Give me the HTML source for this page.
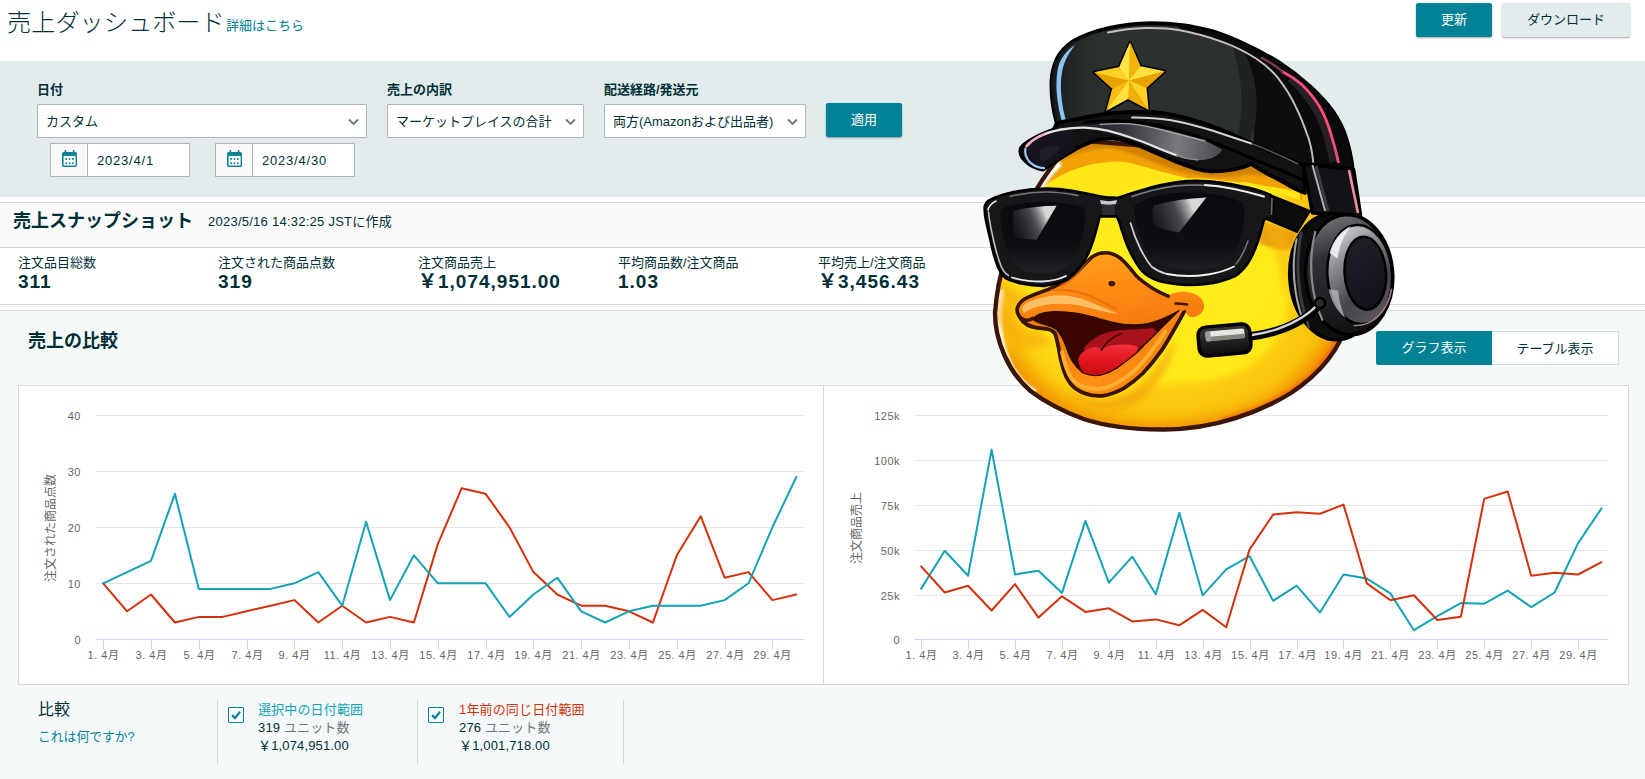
<!DOCTYPE html>
<html lang="ja">
<head>
<meta charset="utf-8">
<title>売上ダッシュボード</title>
<style>
*{box-sizing:border-box;margin:0;padding:0}
html,body{width:1645px;height:779px;overflow:hidden;background:#fff}
body{position:relative;font-family:"Liberation Sans","Noto Sans CJK JP",sans-serif;color:#002f36;font-size:13px}
.abs{position:absolute;white-space:nowrap}
.title{left:7px;top:6px;font-size:24.2px;font-weight:300;line-height:34px;color:#002f36}
.tlink{left:226px;top:16px;font-size:13px;line-height:20px;color:#008296}
.btn{height:34px;border-radius:2px;text-align:center;line-height:34px;font-size:13px;box-shadow:0 1px 2px rgba(0,0,0,.35)}
.btn.pri{background:#008296;color:#fff}
.btn.sec{background:#e3eced;color:#002f36}
.band{left:0;top:61px;width:1645px;height:136px;background:#e3eced}
.lbl{font-weight:700;font-size:13px;line-height:18px}
.sel{height:34px;background:#fff;border:1px solid #aab7b8;border-radius:1px;font-size:13px;line-height:34px;padding-left:8px;color:#002f36}
.chev{position:absolute;right:7px;top:13px;width:11px;height:8px}
.date{height:34px;background:#fff;border:1px solid #aab7b8;font-size:13px;line-height:34px;letter-spacing:.8px}
.date .ic{position:absolute;left:0;top:0;width:37px;height:32px;background:#fafafa;border-right:1px solid #aab7b8}
.date .tx{position:absolute;left:46px;top:0}
.hline{left:0;width:1645px;height:1px;background:#d5dbdb}
.snaphead{left:0;top:203px;width:1645px;height:44px;background:#fafafa}
.h2{font-weight:700;font-size:18px;line-height:26px}
.mlabel{font-size:13px;line-height:16px}
.mval{font-weight:700;font-size:19px;line-height:22px;letter-spacing:1px}
.sect{left:0;top:311px;width:1645px;height:468px;background:#f5f9fa}
.chartbox{left:18px;top:385px;width:1611px;height:300px;background:#fff;border:1px solid #d6d8d8}
.charts{position:absolute;left:0;top:0}
.ax{font-size:11px;fill:#666;font-family:"Liberation Sans","Noto Sans CJK JP",sans-serif;letter-spacing:.5px}
.axt{font-size:12px;fill:#666;font-family:"Liberation Sans","Noto Sans CJK JP",sans-serif}
.vsep{width:1px;top:700px;height:64px;background:#d5dbdb}
.cb{width:16px;height:16px;border:1px solid #008296;background:#fff;border-radius:1px}
.leg{font-size:13px;line-height:18px;letter-spacing:.15px}
.leg .g{color:#6c7778}
.tog{height:34px;top:331px;line-height:34px;text-align:center;font-size:13px}
.duck{position:absolute;left:0;top:0}
</style>
</head>
<body>
<div class="abs title">売上ダッシュボード</div>
<div class="abs tlink">詳細はこちら</div>
<div class="abs btn pri" style="left:1416px;top:3px;width:76px">更新</div>
<div class="abs btn sec" style="left:1502px;top:3px;width:128px">ダウンロード</div>

<div class="abs band"></div>
<div class="abs lbl" style="left:37px;top:81px">日付</div>
<div class="abs lbl" style="left:387px;top:81px">売上の内訳</div>
<div class="abs lbl" style="left:604px;top:81px">配送経路/発送元</div>
<div class="abs sel" style="left:37px;top:104px;width:330px">カスタム<svg class="chev" viewBox="0 0 11 8"><path d="M1 1.5 L5.5 6 L10 1.5" fill="none" stroke="#6c7778" stroke-width="1.9"/></svg></div>
<div class="abs sel" style="left:387px;top:104px;width:197px">マーケットプレイスの合計<svg class="chev" viewBox="0 0 11 8"><path d="M1 1.5 L5.5 6 L10 1.5" fill="none" stroke="#6c7778" stroke-width="1.9"/></svg></div>
<div class="abs sel" style="left:604px;top:104px;width:202px">両方(Amazonおよび出品者)<svg class="chev" viewBox="0 0 11 8"><path d="M1 1.5 L5.5 6 L10 1.5" fill="none" stroke="#6c7778" stroke-width="1.9"/></svg></div>
<div class="abs btn pri" style="left:826px;top:103px;width:76px">適用</div>

<div class="abs date" style="left:50px;top:143px;width:140px"><span class="ic"><svg width="37" height="32" viewBox="0 0 37 32"><g fill="#0f8199"><rect x="11" y="8" width="15" height="15" rx="1.8"/><rect x="13.6" y="6" width="1.6" height="3"/><rect x="21.8" y="6" width="1.6" height="3"/></g><rect x="12.6" y="12" width="12" height="9.5" fill="#fff"/><g fill="#0f8199"><rect x="14.4" y="14" width="1.6" height="1.8"/><rect x="17.7" y="14" width="1.6" height="1.8"/><rect x="21" y="14" width="1.6" height="1.8"/><rect x="14.4" y="18.3" width="1.6" height="1.8"/><rect x="17.7" y="18.3" width="1.6" height="1.8"/><rect x="21" y="18.3" width="1.6" height="1.8"/></g></svg></span><span class="tx">2023/4/1</span></div>
<div class="abs date" style="left:215px;top:143px;width:140px"><span class="ic"><svg width="37" height="32" viewBox="0 0 37 32"><g fill="#0f8199"><rect x="11" y="8" width="15" height="15" rx="1.8"/><rect x="13.6" y="6" width="1.6" height="3"/><rect x="21.8" y="6" width="1.6" height="3"/></g><rect x="12.6" y="12" width="12" height="9.5" fill="#fff"/><g fill="#0f8199"><rect x="14.4" y="14" width="1.6" height="1.8"/><rect x="17.7" y="14" width="1.6" height="1.8"/><rect x="21" y="14" width="1.6" height="1.8"/><rect x="14.4" y="18.3" width="1.6" height="1.8"/><rect x="17.7" y="18.3" width="1.6" height="1.8"/><rect x="21" y="18.3" width="1.6" height="1.8"/></g></svg></span><span class="tx">2023/4/30</span></div>

<div class="abs hline" style="top:202px"></div>
<div class="abs snaphead"></div>
<div class="abs hline" style="top:247px"></div>
<div class="abs h2" style="left:13px;top:208px">売上スナップショット</div>
<div class="abs" style="left:208px;top:213px;font-size:13px;line-height:18px;letter-spacing:.25px">2023/5/16 14:32:25 JSTに作成</div>

<div class="abs mlabel" style="left:18px;top:255px">注文品目総数</div>
<div class="abs mval" style="left:18px;top:271px">311</div>
<div class="abs mlabel" style="left:218px;top:255px">注文された商品点数</div>
<div class="abs mval" style="left:218px;top:271px">319</div>
<div class="abs mlabel" style="left:418px;top:255px">注文商品売上</div>
<div class="abs mval" style="left:418px;top:271px">￥1,074,951.00</div>
<div class="abs mlabel" style="left:618px;top:255px">平均商品数/注文商品</div>
<div class="abs mval" style="left:618px;top:271px">1.03</div>
<div class="abs mlabel" style="left:818px;top:255px">平均売上/注文商品</div>
<div class="abs mval" style="left:818px;top:271px">￥3,456.43</div>

<div class="abs hline" style="top:304px"></div>
<div class="abs hline" style="top:310px"></div>
<div class="abs sect"></div>
<div class="abs h2" style="left:28px;top:328px">売上の比較</div>
<div class="abs tog" style="left:1376px;width:116px;background:#008296;color:#fff;border-radius:2px 0 0 2px">グラフ表示</div>
<div class="abs tog" style="left:1492px;width:127px;background:#fff;color:#002f36;border:1px solid #d5dbdb;border-left:0">テーブル表示</div>

<div class="abs chartbox"></div>
<div class="abs" style="left:823px;top:386px;width:1px;height:298px;background:#d5dbdb"></div>
<svg class="charts" width="1645" height="779" viewBox="0 0 1645 779">
<line x1="96" x2="804" y1="639.5" y2="639.5" stroke="#ccd6eb"/>
<text x="81" y="643.5" text-anchor="end" class="ax">0</text>
<line x1="96" x2="804" y1="583.5" y2="583.5" stroke="#e6e6e6"/>
<text x="81" y="587.5" text-anchor="end" class="ax">10</text>
<line x1="96" x2="804" y1="527.5" y2="527.5" stroke="#e6e6e6"/>
<text x="81" y="531.5" text-anchor="end" class="ax">20</text>
<line x1="96" x2="804" y1="471.5" y2="471.5" stroke="#e6e6e6"/>
<text x="81" y="475.5" text-anchor="end" class="ax">30</text>
<line x1="96" x2="804" y1="415.5" y2="415.5" stroke="#e6e6e6"/>
<text x="81" y="419.5" text-anchor="end" class="ax">40</text>
<line x1="915" x2="1608" y1="639.5" y2="639.5" stroke="#ccd6eb"/>
<text x="900" y="643.5" text-anchor="end" class="ax">0</text>
<line x1="915" x2="1608" y1="595.5" y2="595.5" stroke="#e6e6e6"/>
<text x="900" y="599.5" text-anchor="end" class="ax">25k</text>
<line x1="915" x2="1608" y1="550.5" y2="550.5" stroke="#e6e6e6"/>
<text x="900" y="554.5" text-anchor="end" class="ax">50k</text>
<line x1="915" x2="1608" y1="505.5" y2="505.5" stroke="#e6e6e6"/>
<text x="900" y="509.5" text-anchor="end" class="ax">75k</text>
<line x1="915" x2="1608" y1="460.5" y2="460.5" stroke="#e6e6e6"/>
<text x="900" y="464.5" text-anchor="end" class="ax">100k</text>
<line x1="915" x2="1608" y1="415.5" y2="415.5" stroke="#e6e6e6"/>
<text x="900" y="419.5" text-anchor="end" class="ax">125k</text>
<line x1="103.5" x2="103.5" y1="639.5" y2="649.5" stroke="#ccd6eb"/>
<text x="103.5" y="658.5" text-anchor="middle" class="ax">1. 4月</text>
<line x1="921.5" x2="921.5" y1="639.5" y2="649.5" stroke="#ccd6eb"/>
<text x="921.5" y="658.5" text-anchor="middle" class="ax">1. 4月</text>
<line x1="151.5" x2="151.5" y1="639.5" y2="649.5" stroke="#ccd6eb"/>
<text x="151.5" y="658.5" text-anchor="middle" class="ax">3. 4月</text>
<line x1="968.5" x2="968.5" y1="639.5" y2="649.5" stroke="#ccd6eb"/>
<text x="968.5" y="658.5" text-anchor="middle" class="ax">3. 4月</text>
<line x1="199.5" x2="199.5" y1="639.5" y2="649.5" stroke="#ccd6eb"/>
<text x="199.5" y="658.5" text-anchor="middle" class="ax">5. 4月</text>
<line x1="1015.5" x2="1015.5" y1="639.5" y2="649.5" stroke="#ccd6eb"/>
<text x="1015.5" y="658.5" text-anchor="middle" class="ax">5. 4月</text>
<line x1="247.5" x2="247.5" y1="639.5" y2="649.5" stroke="#ccd6eb"/>
<text x="247.5" y="658.5" text-anchor="middle" class="ax">7. 4月</text>
<line x1="1062.5" x2="1062.5" y1="639.5" y2="649.5" stroke="#ccd6eb"/>
<text x="1062.5" y="658.5" text-anchor="middle" class="ax">7. 4月</text>
<line x1="294.5" x2="294.5" y1="639.5" y2="649.5" stroke="#ccd6eb"/>
<text x="294.5" y="658.5" text-anchor="middle" class="ax">9. 4月</text>
<line x1="1109.5" x2="1109.5" y1="639.5" y2="649.5" stroke="#ccd6eb"/>
<text x="1109.5" y="658.5" text-anchor="middle" class="ax">9. 4月</text>
<line x1="342.5" x2="342.5" y1="639.5" y2="649.5" stroke="#ccd6eb"/>
<text x="342.5" y="658.5" text-anchor="middle" class="ax">11. 4月</text>
<line x1="1156.5" x2="1156.5" y1="639.5" y2="649.5" stroke="#ccd6eb"/>
<text x="1156.5" y="658.5" text-anchor="middle" class="ax">11. 4月</text>
<line x1="390.5" x2="390.5" y1="639.5" y2="649.5" stroke="#ccd6eb"/>
<text x="390.5" y="658.5" text-anchor="middle" class="ax">13. 4月</text>
<line x1="1203.5" x2="1203.5" y1="639.5" y2="649.5" stroke="#ccd6eb"/>
<text x="1203.5" y="658.5" text-anchor="middle" class="ax">13. 4月</text>
<line x1="438.5" x2="438.5" y1="639.5" y2="649.5" stroke="#ccd6eb"/>
<text x="438.5" y="658.5" text-anchor="middle" class="ax">15. 4月</text>
<line x1="1250.5" x2="1250.5" y1="639.5" y2="649.5" stroke="#ccd6eb"/>
<text x="1250.5" y="658.5" text-anchor="middle" class="ax">15. 4月</text>
<line x1="486.5" x2="486.5" y1="639.5" y2="649.5" stroke="#ccd6eb"/>
<text x="486.5" y="658.5" text-anchor="middle" class="ax">17. 4月</text>
<line x1="1297.5" x2="1297.5" y1="639.5" y2="649.5" stroke="#ccd6eb"/>
<text x="1297.5" y="658.5" text-anchor="middle" class="ax">17. 4月</text>
<line x1="533.5" x2="533.5" y1="639.5" y2="649.5" stroke="#ccd6eb"/>
<text x="533.5" y="658.5" text-anchor="middle" class="ax">19. 4月</text>
<line x1="1343.5" x2="1343.5" y1="639.5" y2="649.5" stroke="#ccd6eb"/>
<text x="1343.5" y="658.5" text-anchor="middle" class="ax">19. 4月</text>
<line x1="581.5" x2="581.5" y1="639.5" y2="649.5" stroke="#ccd6eb"/>
<text x="581.5" y="658.5" text-anchor="middle" class="ax">21. 4月</text>
<line x1="1390.5" x2="1390.5" y1="639.5" y2="649.5" stroke="#ccd6eb"/>
<text x="1390.5" y="658.5" text-anchor="middle" class="ax">21. 4月</text>
<line x1="629.5" x2="629.5" y1="639.5" y2="649.5" stroke="#ccd6eb"/>
<text x="629.5" y="658.5" text-anchor="middle" class="ax">23. 4月</text>
<line x1="1437.5" x2="1437.5" y1="639.5" y2="649.5" stroke="#ccd6eb"/>
<text x="1437.5" y="658.5" text-anchor="middle" class="ax">23. 4月</text>
<line x1="677.5" x2="677.5" y1="639.5" y2="649.5" stroke="#ccd6eb"/>
<text x="677.5" y="658.5" text-anchor="middle" class="ax">25. 4月</text>
<line x1="1484.5" x2="1484.5" y1="639.5" y2="649.5" stroke="#ccd6eb"/>
<text x="1484.5" y="658.5" text-anchor="middle" class="ax">25. 4月</text>
<line x1="725.5" x2="725.5" y1="639.5" y2="649.5" stroke="#ccd6eb"/>
<text x="725.5" y="658.5" text-anchor="middle" class="ax">27. 4月</text>
<line x1="1531.5" x2="1531.5" y1="639.5" y2="649.5" stroke="#ccd6eb"/>
<text x="1531.5" y="658.5" text-anchor="middle" class="ax">27. 4月</text>
<line x1="772.5" x2="772.5" y1="639.5" y2="649.5" stroke="#ccd6eb"/>
<text x="772.5" y="658.5" text-anchor="middle" class="ax">29. 4月</text>
<line x1="1578.5" x2="1578.5" y1="639.5" y2="649.5" stroke="#ccd6eb"/>
<text x="1578.5" y="658.5" text-anchor="middle" class="ax">29. 4月</text>
<text transform="translate(55,528) rotate(-90)" text-anchor="middle" class="axt">注文された商品点数</text>
<text transform="translate(861,528) rotate(-90)" text-anchor="middle" class="axt">注文商品売上</text>
<polyline fill="none" stroke="#d5310a" stroke-width="2" stroke-linejoin="round" stroke-linecap="round" points="103.2,583.3 127.1,611.3 151.0,594.5 174.9,622.5 198.8,616.9 222.7,616.9 246.6,611.3 270.5,605.7 294.4,600.1 318.3,622.5 342.2,605.7 366.1,622.5 390.0,616.9 413.9,622.5 437.8,544.1 461.7,488.2 485.6,493.8 509.5,527.3 533.4,572.1 557.3,594.5 581.2,605.7 605.1,605.7 629.0,611.3 652.9,622.5 676.8,555.3 700.7,516.2 724.6,577.7 748.5,572.1 772.4,600.1 796.3,594.5"/>
<polyline fill="none" stroke="#13a3b5" stroke-width="2" stroke-linejoin="round" stroke-linecap="round" points="103.2,583.3 127.1,572.1 151.0,560.9 174.9,493.8 198.8,588.9 222.7,588.9 246.6,588.9 270.5,588.9 294.4,583.3 318.3,572.1 342.2,605.7 366.1,521.8 390.0,600.1 413.9,555.3 437.8,583.3 461.7,583.3 485.6,583.3 509.5,616.9 533.4,594.5 557.3,577.7 581.2,611.3 605.1,622.5 629.0,611.3 652.9,605.7 676.8,605.7 700.7,605.7 724.6,600.1 748.5,583.3 772.4,527.3 796.3,477.0"/>
<polyline fill="none" stroke="#13a3b5" stroke-width="2" stroke-linejoin="round" stroke-linecap="round" points="921.2,588.6 944.7,550.8 968.1,575.7 991.6,449.6 1015.0,574.5 1038.5,570.7 1062.0,592.9 1085.4,520.9 1108.9,582.7 1132.3,556.7 1155.8,594.3 1179.3,512.7 1202.7,595.4 1226.2,569.3 1249.6,556.2 1273.1,600.8 1296.6,585.7 1320.0,612.6 1343.5,574.5 1366.9,578.6 1390.4,593.4 1413.9,630.2 1437.3,616.2 1460.8,603.1 1484.2,603.7 1507.7,590.6 1531.2,607.1 1554.6,592.5 1578.1,543.1 1601.5,508.4"/>
<polyline fill="none" stroke="#d5310a" stroke-width="2" stroke-linejoin="round" stroke-linecap="round" points="921.2,566.4 944.7,592.5 968.1,585.7 991.6,610.5 1015.0,584.1 1038.5,617.6 1062.0,596.3 1085.4,611.9 1108.9,608.3 1132.3,621.4 1155.8,619.4 1179.3,625.3 1202.7,609.9 1226.2,627.3 1249.6,549.4 1273.1,514.6 1296.6,512.3 1320.0,513.7 1343.5,504.6 1366.9,583.4 1390.4,600.3 1413.9,595.2 1437.3,620.0 1460.8,616.7 1484.2,498.9 1507.7,491.5 1531.2,575.7 1554.6,572.7 1578.1,574.5 1601.5,562.1"/>
</svg>

<div class="abs" style="left:38px;top:698px;font-size:16px;line-height:24px">比較</div>
<div class="abs" style="left:38px;top:728px;font-size:12.8px;line-height:18px;color:#008296">これは何ですか?</div>
<div class="abs vsep" style="left:217px"></div>
<div class="abs vsep" style="left:417px"></div>
<div class="abs vsep" style="left:623px"></div>
<div class="abs cb" style="left:228px;top:707px"><svg width="14" height="14" viewBox="0 0 14 14"><path d="M3 7.2 L6 10 L11 3.8" fill="none" stroke="#008296" stroke-width="2.3"/></svg></div>
<div class="abs cb" style="left:428px;top:707px"><svg width="14" height="14" viewBox="0 0 14 14"><path d="M3 7.2 L6 10 L11 3.8" fill="none" stroke="#008296" stroke-width="2.3"/></svg></div>
<div class="abs leg" style="left:258px;top:701px"><div style="color:#13a3b5">選択中の日付範囲</div><div>319 <span class="g">ユニット数</span></div><div>￥1,074,951.00</div></div>
<div class="abs leg" style="left:459px;top:701px"><div style="color:#d5310a">1年前の同じ日付範囲</div><div>276 <span class="g">ユニット数</span></div><div>￥1,001,718.00</div></div>

<svg class="duck" width="1645" height="779" viewBox="0 0 1645 779">
<defs>
<radialGradient id="gHead" gradientUnits="userSpaceOnUse" cx="0" cy="0" r="1" gradientTransform="translate(1168 268) scale(186 166)">
<stop offset="0" stop-color="#fff21e"/><stop offset=".7" stop-color="#ffe818"/><stop offset=".88" stop-color="#fdd010"/><stop offset="1" stop-color="#f7b008"/>
</radialGradient>
<linearGradient id="gCrown" gradientUnits="userSpaceOnUse" x1="1060" y1="60" x2="1290" y2="130">
<stop offset="0" stop-color="#1c211e"/><stop offset=".45" stop-color="#343a34"/><stop offset=".8" stop-color="#1a1e1b"/><stop offset="1" stop-color="#0a0b0a"/>
</linearGradient>
<linearGradient id="gBrim" gradientUnits="userSpaceOnUse" x1="1070" y1="128" x2="1220" y2="150">
<stop offset="0" stop-color="#1a191e"/><stop offset=".35" stop-color="#34333a"/><stop offset=".72" stop-color="#7a797e"/><stop offset="1" stop-color="#4c4b50"/>
</linearGradient>
<linearGradient id="gLens" gradientUnits="userSpaceOnUse" x1="0" y1="195" x2="0" y2="280">
<stop offset="0" stop-color="#0a0a0e"/><stop offset=".6" stop-color="#0e0e13"/><stop offset="1" stop-color="#26262b"/>
</linearGradient>
<linearGradient id="gBeak" gradientUnits="userSpaceOnUse" x1="1100" y1="250" x2="1110" y2="330">
<stop offset="0" stop-color="#ffa21c"/><stop offset=".45" stop-color="#ff8c14"/><stop offset="1" stop-color="#f57a0e"/>
</linearGradient>
<linearGradient id="gRing" gradientUnits="userSpaceOnUse" x1="1330" y1="230" x2="1390" y2="320">
<stop offset="0" stop-color="#e2e2e6"/><stop offset=".3" stop-color="#8e8e94"/><stop offset=".65" stop-color="#44444a"/><stop offset="1" stop-color="#62585f"/>
</linearGradient>
<linearGradient id="gMic" gradientUnits="userSpaceOnUse" x1="0" y1="326" x2="0" y2="356">
<stop offset="0" stop-color="#3a3a3a"/><stop offset="1" stop-color="#0a0a0a"/>
</linearGradient>
<linearGradient id="gRefL" gradientUnits="userSpaceOnUse" x1="1014" y1="228" x2="1046" y2="214">
<stop offset="0" stop-color="#5a5a62" stop-opacity=".12"/><stop offset=".6" stop-color="#85858b" stop-opacity=".5"/><stop offset="1" stop-color="#f4f4f4" stop-opacity=".88"/>
</linearGradient>
<linearGradient id="gRefR" gradientUnits="userSpaceOnUse" x1="1154" y1="222" x2="1192" y2="206">
<stop offset="0" stop-color="#5a5a62" stop-opacity=".15"/><stop offset=".6" stop-color="#85858b" stop-opacity=".5"/><stop offset="1" stop-color="#f4f4f4" stop-opacity=".88"/>
</linearGradient>
<linearGradient id="gLowBeak" gradientUnits="userSpaceOnUse" x1="1060" y1="330" x2="1150" y2="390">
<stop offset="0" stop-color="#f07a0c"/><stop offset=".5" stop-color="#ff9216"/><stop offset="1" stop-color="#f3800e"/>
</linearGradient>
<linearGradient id="gTongue" gradientUnits="userSpaceOnUse" x1="0" y1="345" x2="0" y2="376">
<stop offset="0" stop-color="#f03038"/><stop offset=".5" stop-color="#e3161e"/><stop offset="1" stop-color="#c40d14"/>
</linearGradient>
<linearGradient id="gCup" gradientUnits="userSpaceOnUse" x1="1320" y1="215" x2="1345" y2="330">
<stop offset="0" stop-color="#77777c"/><stop offset=".35" stop-color="#303034"/><stop offset="1" stop-color="#131316"/>
</linearGradient>
<linearGradient id="gDisc" gradientUnits="userSpaceOnUse" x1="1345" y1="240" x2="1385" y2="310">
<stop offset="0" stop-color="#20202a"/><stop offset="1" stop-color="#111118"/>
</linearGradient>
<filter id="fBlur2" x="-20%" y="-20%" width="140%" height="140%"><feGaussianBlur stdDeviation="1.5"/></filter>
<filter id="fBlur3" x="-20%" y="-20%" width="140%" height="140%"><feGaussianBlur stdDeviation="3"/></filter>
<filter id="fBlur5" x="-20%" y="-20%" width="140%" height="140%"><feGaussianBlur stdDeviation="6"/></filter>
<linearGradient id="gCrownL" gradientUnits="userSpaceOnUse" x1="1052" y1="0" x2="1110" y2="0">
<stop offset="0" stop-color="#14181a"/><stop offset="1" stop-color="#2c312d" stop-opacity="0"/>
</linearGradient>
<filter id="fBlur1" x="-20%" y="-20%" width="140%" height="140%"><feGaussianBlur stdDeviation="0.9"/></filter>
</defs>

<!-- head -->
<clipPath id="cHead"><path d="M1075,140 C1042,172 1000,240 995,313 C995,340 1008,372 1030.5,391 C1045,402 1062,411 1083.5,419 C1108,427 1135,429.5 1162,429.5 C1215,430 1262,411 1291,393 C1318,375 1340,350 1348,320 C1360,270 1350,200 1320,160 Z"/></clipPath>
<path d="M1075,140 C1042,172 1000,240 995,313 C995,340 1008,372 1030.5,391 C1045,402 1062,411 1083.5,419 C1108,427 1135,429.5 1162,429.5 C1215,430 1262,411 1291,393 C1318,375 1340,350 1348,320 C1360,270 1350,200 1320,160 Z" fill="url(#gHead)"/>
<g clip-path="url(#cHead)">
<!-- toon shading band -->
<path d="M1283,180 C1290,230 1292,290 1286,320 C1278,350 1250,374 1215,380 C1180,386 1160,380 1140,392 C1115,408 1085,408 1060,396 C1030,380 1012,350 1008,320 L980,330 L1000,450 L1360,450 L1370,180 Z" fill="#f9bd0a" opacity=".6" filter="url(#fBlur3)"/>
<path d="M1340,300 C1330,345 1300,380 1260,402 C1220,420 1160,428 1110,418 C1070,410 1035,388 1012,352 L985,360 L1010,450 L1370,450 L1370,300 Z" fill="#f29204" opacity=".9" filter="url(#fBlur5)"/>
<path d="M1346,318 C1338,352 1316,376 1290,393 C1268,407 1245,416 1222,422" fill="none" stroke="#f2601c" stroke-width="7" opacity=".85" filter="url(#fBlur2)"/>
<path d="M1002,290 C999,305 998.5,322 1000.5,338 C1003,353 1009,366 1017,377 C1022,383 1028,388.5 1035,393" fill="none" stroke="#fbfbf6" stroke-width="6.5" opacity=".95" filter="url(#fBlur1)"/>
<!-- cheek shading left of beak -->
<path d="M1003,283 C1010,290 1020,294 1030,294 C1022,300 1016,306 1015,314 C1014,322 1022,330 1034,332 C1044,333 1050,336 1052,345 L1020,350 L995,320 Z" fill="#f6a808" opacity=".55" filter="url(#fBlur3)"/>
<!-- shadow under lower beak -->
<path d="M1066,388 C1080,402 1104,404 1126,394 C1146,382 1162,362 1176,338 C1172,366 1156,390 1134,404 C1110,416 1082,410 1066,388 Z" fill="#f29a08" opacity=".6" filter="url(#fBlur3)"/>
<path d="M1263,221 L1297,233 C1296,240 1293,246 1288,250 C1278,250 1268,247 1258,243 Z" fill="#e8920a" opacity=".8" filter="url(#fBlur2)"/>
<path d="M1262,222 C1270,232 1282,262 1284,300 C1290,270 1290,240 1284,225 Z" fill="#f5b00a" opacity=".5" filter="url(#fBlur3)"/>
<!-- shadow under brim -->
<path d="M1030,178 C1045,160 1075,146 1108,138 C1130,138 1150,150 1180,163 C1210,172 1230,171 1246,164 L1302,176 L1302,200 C1270,186 1235,180 1188,178 C1160,178 1135,184 1119,193 L1093,193 C1078,187 1060,185 1036,187 Z" fill="#f3a206"/>
<path d="M1062,154 C1075,146 1092,139 1108,138 C1130,138 1150,150 1180,163 C1210,172 1230,171 1246,164 L1300,176 C1280,176 1262,176 1246,174 C1226,180 1205,178 1180,172 C1155,164 1130,150 1108,148 C1090,149 1075,153 1062,160 Z" fill="#c97a02" opacity=".8" filter="url(#fBlur2)"/>
<path d="M1040,190 C1062,170 1095,160 1125,162 C1155,168 1195,186 1245,182 L1300,192 L1300,200 C1260,186 1220,178 1188,178 C1160,179 1135,185 1119,194 L1093,194 C1075,188 1055,186 1036,188 Z" fill="#ffe616"/>
<path d="M1060,163 C1052,170 1045,179 1039.5,189" fill="none" stroke="#f8f8f4" stroke-width="6.5" filter="url(#fBlur1)"/>
</g>
<path d="M1075,140 C1042,172 1000,240 995,313 C995,340 1008,372 1030.5,391 C1045,402 1062,411 1083.5,419 C1108,427 1135,429.5 1162,429.5 C1215,430 1262,411 1291,393 C1318,375 1340,350 1348,320 C1360,270 1350,200 1320,160 Z" fill="none" stroke="#3a1607" stroke-width="4.4"/>
<!-- beak: lower -->
<path d="M1019,314 C1020.5,321 1026,325 1032.5,326.9 C1038,328.5 1043,328.5 1047.4,329 C1050,329.5 1053,331 1054.8,333.2 C1057,339 1058,345 1059,350.2 C1060,357 1061.5,363 1063.3,369.3 C1065,375 1067.5,380 1070.7,384.1 C1075,389 1080,392 1085.5,393.6 C1091,395.5 1097,396.3 1102.5,395.8 C1110,394.5 1117,392 1123.7,388.3 C1130.5,384 1137,379 1142.7,373.5 C1149.5,366.5 1156,358.5 1161.8,350.2 C1166.5,343 1170.5,336 1174.5,329 C1178,322.5 1182,316 1185.1,309.9 L1187.2,304.6 L1150,310 L1050,305 Z" fill="url(#gLowBeak)" stroke="#3a1407" stroke-width="3.8" stroke-linejoin="round"/>
<path d="M1062,352 C1064,362 1067,372 1072,379 C1078,386 1088,389 1098,389 C1110,388 1122,381 1134,371 C1146,360 1156,346 1165,332" fill="none" stroke="#ffb536" stroke-width="4" stroke-linecap="round" opacity=".85"/>
<!-- mouth interior -->
<path d="M1032.5,318.4 C1035,315.5 1038,314 1041,313.1 C1046,311.5 1052,311 1058,311 C1065,311 1072,312 1079.2,313.1 C1086.5,314.5 1093.5,316.5 1100.4,318.4 C1108,320.5 1116,322.5 1123.7,323.7 C1130,324.3 1136.5,324.3 1142.7,323.7 C1149,322.8 1155.5,320.8 1161.8,318.4 C1167.5,316 1173.5,313 1178.8,309.9 L1170.3,318.4 C1164.5,324 1159,329.5 1153.3,335.4 C1147.5,341 1142,346.5 1136.4,352.3 C1130,357.5 1123.5,362.5 1117.3,367.1 C1112,370.5 1106,373 1100.4,374.6 C1094.5,375.5 1088.5,374.5 1083.4,372.4 C1079,369 1075.5,365 1072.8,360.8 C1070,356 1068,351 1066.5,346 C1064.5,340 1061,334 1056.9,329 C1054,326.5 1050.5,325.5 1047.4,324.8 C1042,323.5 1036,321.5 1032.5,318.4 Z" fill="#3c0500" stroke="#2a0a02" stroke-width="2.5" stroke-linejoin="round"/>
<path d="M1083.4,349 C1089,341 1097,336 1104.6,333.2 C1111,331.2 1117.5,330.5 1123.7,330.1 C1133.5,329.5 1143.5,329 1153.3,328 L1157,331.5 C1150.5,338 1144.5,343.5 1138.5,349 L1100,360 Z" fill="#a8121a"/>
<path d="M1078.1,358.7 C1080,354 1083.5,351 1087.6,349.1 C1090.5,347.8 1093.5,347 1096.1,347 C1098.5,347.3 1100.3,348.5 1101.4,350.2 C1105,347 1110,345.3 1115.2,344.9 C1121,344.3 1127,344.3 1132.1,344.9 C1135,345.5 1137,346.8 1138.5,348.1 L1136.4,352.3 C1130,357.5 1123.5,362.5 1117.3,367.1 C1112,370.5 1106,373 1100.4,374.6 C1094.5,375.5 1088.5,374.5 1083.4,372.4 C1080.5,368.5 1078.5,363.5 1078.1,358.7 Z" fill="url(#gTongue)"/>
<path d="M1101.4,350.2 C1105,343 1112,337 1121.5,333.5" fill="none" stroke="#4a0505" stroke-width="1.6" stroke-linecap="round"/>
<!-- beak: upper -->
<path d="M1017.3,307.8 C1019,303 1023,299.5 1028.3,297.2 C1034.5,294.5 1041,292 1047.4,289.8 C1054,287 1060.5,284 1066.5,280.3 C1069.5,278.5 1072.5,276.5 1075,274 C1080.5,269 1085,264 1089.8,259 C1094,254.5 1100,252.5 1106.7,252.7 C1113,253 1119,256.5 1123.7,261.2 C1128.5,266 1132.5,271 1136.4,276 C1141.5,281 1147.5,285 1153.3,288.7 C1158,291.5 1163,294 1168.2,296.2 C1170,294.5 1172,293.5 1174.5,293 C1178.5,292 1183,291.5 1187.2,291.9 C1192.5,292.5 1197,294.5 1200,297.2 C1202.5,299.5 1204,302.5 1204.2,305.7 C1204,309 1202.5,312 1200,314.2 C1197.5,316.2 1194.5,317.3 1191.5,317.3 C1188,316.5 1186,313 1185.5,309.5 C1183.5,311 1181,311 1178.8,309.9 C1173.5,313 1167.5,316 1161.8,318.4 C1155.5,320.8 1149,322.8 1142.7,323.7 C1136.5,324.3 1130,324.3 1123.7,323.7 C1116,322.5 1108,320.5 1100.4,318.4 C1093.5,316.5 1086.5,314.5 1079.2,313.1 C1072,312 1065,311 1058,311 C1052,311 1046,311.5 1041,313.1 C1038,314 1035,315.5 1032.5,318.4 C1030,320 1027,320.5 1024.5,320 C1021.5,319 1019.5,317.5 1018.5,315 C1017.3,313 1016.8,310 1017.3,307.8 Z" fill="url(#gBeak)"/>
<path d="M1168.2,296.2 C1163,294 1158,291.5 1153.3,288.7 C1147.5,285 1141.5,281 1136.4,276 C1132.5,271 1128.5,266 1123.7,261.2 C1119,256.5 1113,253 1106.7,252.7 C1100,252.5 1094,254.5 1089.8,259 C1085,264 1080.5,269 1075,274 C1072.5,276.5 1069.5,278.5 1066.5,280.3 C1060.5,284 1054,287 1047.4,289.8 C1041,292 1034.5,294.5 1028.3,297.2 C1023,299.5 1019,303 1017.3,307.8 C1016.8,310 1017.3,313 1018.5,315 C1019.5,317.5 1021.5,319 1024.5,320 C1027,320.5 1030,320 1032.5,318.4" fill="none" stroke="#3a1407" stroke-width="3.6" stroke-linecap="round" stroke-linejoin="round"/>
<path d="M1187.2,304.6 C1183,304 1178,303.5 1175.5,303.5" fill="none" stroke="#3a1407" stroke-width="2.5" stroke-linecap="round"/>
<!-- upper lip highlight + crease -->
<path d="M1023,306 C1028,301 1038,298 1050,296 C1062,294 1075,296 1088,301 C1100,306 1110,311 1120,314 C1106,313 1095,309 1082,306 C1068,303 1052,303 1040,306 C1032,308 1027,311 1024,313 C1022,311 1022,308 1023,306 Z" fill="#ffc66e" opacity=".9"/>
<path d="M1052,290 C1065,289 1078,291 1090,296 C1100,300 1108,305 1116,309" fill="none" stroke="#e56d0a" stroke-width="2.2" stroke-linecap="round" opacity=".85"/>
<path d="M1060,284 C1066,281 1072,277 1077,272 C1082,267 1086,262 1091,258 C1080,272 1074,280 1062,288 Z" fill="#e06608" opacity=".6"/>
<ellipse cx="1111.6" cy="283.4" rx="4.8" ry="3.8" fill="#ffa52a"/>
<ellipse cx="1111.8" cy="283.6" rx="3.6" ry="2.8" fill="#4a1804"/>

<!-- cap crown -->
<path d="M1056.9,124 C1053,110 1051,95 1051.5,80.5 C1052,72 1054,65 1056.9,58.7 C1061,51 1066,46 1073.3,41.2 C1084,35 1096,31 1108.3,28.1 C1120,25.3 1133,23.6 1145.4,23.3 C1158,23 1172,23.8 1184.7,25.5 C1194,27 1203,29 1212.8,31.4 C1224,34.8 1235,39.5 1245.5,44.5 C1257,49.8 1268,55.5 1278.3,61.9 C1290,69.5 1301,78 1311,87.1 C1319,94.5 1326.5,102.5 1332.8,111.1 C1338.5,119.5 1343,128 1345.9,137.3 C1349,146.5 1351,156 1352.5,166.5 L1303,166 C1290,160 1279,155 1267.3,150.4 C1253,144 1238,137 1223.7,130.7 C1209,125 1195,120 1180,116.5 C1174,115 1168,114 1162.8,113.3 C1152,112 1141,111.8 1130.1,112.2 C1123,112.5 1115,113 1108.3,113.7 C1097,115.3 1086,117.3 1075.5,119.4 C1069,120.8 1063,122.3 1056.9,124 Z" fill="#2c312d" stroke="#000" stroke-width="3.8" stroke-linejoin="round"/>
<clipPath id="cCrown"><path d="M1056.9,124 C1053,110 1051,95 1051.5,80.5 C1052,72 1054,65 1056.9,58.7 C1061,51 1066,46 1073.3,41.2 C1084,35 1096,31 1108.3,28.1 C1120,25.3 1133,23.6 1145.4,23.3 C1158,23 1172,23.8 1184.7,25.5 C1194,27 1203,29 1212.8,31.4 C1224,34.8 1235,39.5 1245.5,44.5 C1257,49.8 1268,55.5 1278.3,61.9 C1290,69.5 1301,78 1311,87.1 C1319,94.5 1326.5,102.5 1332.8,111.1 C1338.5,119.5 1343,128 1345.9,137.3 C1349,146.5 1351,156 1352.5,166.5 L1303,166 C1290,160 1279,155 1267.3,150.4 C1253,144 1238,137 1223.7,130.7 C1209,125 1195,120 1180,116.5 C1174,115 1168,114 1162.8,113.3 C1152,112 1141,111.8 1130.1,112.2 C1123,112.5 1115,113 1108.3,113.7 C1097,115.3 1086,117.3 1075.5,119.4 C1069,120.8 1063,122.3 1056.9,124 Z"/></clipPath>
<g clip-path="url(#cCrown)">
<path d="M1051,40 L1110,25 L1120,125 L1051,130 Z" fill="url(#gCrownL)"/>
<!-- side panel -->
<path d="M1228,36 C1236,41 1239,45 1241,47.7 C1247,57 1251,66 1253,76 C1255.5,86 1256.5,96 1256.4,106.7 C1256.3,114 1255.5,121 1254,128.5 L1254,150 L1320,175 L1360,170 L1340,80 L1260,40 Z" fill="#0c0e0c"/>
<path d="M1241,47.7 C1247,57 1251,66 1253,76 C1255.5,86 1256.5,96 1256.4,106.7 C1256.3,114 1255.5,121 1254,128.5 L1250,140 L1238,134 C1241,120 1242,104 1241,90 C1240,75 1237,60 1232,46 Z" fill="#1c201c" opacity=".8"/>
<!-- headband over cap -->
<path d="M1180,22 C1200,26 1224,34 1245.5,44.5 C1257,49.8 1268,55.5 1278.3,61.9 C1290,69.5 1301,78 1311,87.1 C1319,94.5 1326.5,102.5 1332.8,111.1 C1338.5,119.5 1343,128 1345.9,137.3 C1349,146.5 1351,156 1352.5,168 L1313.2,168 C1312,150 1310,141 1306.6,132.9 C1303.5,124 1300,115 1295.7,106.7 C1291,96 1285,87 1278.3,78.3 C1272,70.5 1264.5,64 1256.4,58.7 C1246,52 1235,46.5 1223.7,42.3 C1209,37 1195,33 1180,30.3 Z" fill="#0a090c"/>
<path d="M1290,78 C1303,90 1313,103 1320,117 C1326,130 1330,146 1333,162" fill="none" stroke="#2a2228" stroke-width="7" opacity=".9"/>
</g>
<!-- seam -->
<path d="M1108,32.5 C1120,30 1133,28.3 1145.4,28 C1158,27.7 1170,28.5 1180,30.3 C1195,33 1209,37 1223.7,42.3 C1235,46.5 1246,52 1256.4,58.7 C1264.5,64 1272,70.5 1278.3,78.3 C1285,87 1291,96 1295.7,106.7 C1300,115 1303.5,124 1306.6,132.9 C1310,141 1312,150 1313.2,162" fill="none" stroke="#c4c0c0" stroke-width="1.9" stroke-linecap="round"/>
<path d="M1282.6,71.8 C1290,75.5 1296.5,80 1302.3,84.9 C1309,91.5 1315,99 1319.7,106.7 C1324.5,115 1328,124 1330.6,132.9 C1333.5,142 1336,151 1338.3,162" fill="none" stroke="#fa4e7c" stroke-width="2.8" stroke-linecap="round"/>
<path d="M1262,58 C1270,62 1277,67 1282.6,71.8" fill="none" stroke="#8a3a56" stroke-width="2" stroke-linecap="round"/>
<!-- left blue rim -->
<path d="M1075,45 C1066,51 1061,58 1058.5,66 C1056,76 1056,88 1057.5,100 C1058.5,108 1060,115 1062,121.5 L1066,120.5 C1063.5,112 1062,104 1061.3,95 C1060.5,84 1061,74 1063.5,66 C1065.5,59 1069,53 1075,45 Z" fill="#8cc4f0"/>
<!-- star -->
<path d="M1130.1,42.3 L1140.6,66.3 L1165,71.3 L1146.5,88.1 L1148.6,110 L1127.9,99.1 L1106.1,111.1 L1112.2,88.8 L1094.1,72.2 L1119.2,67 Z" fill="#fdc716" stroke="#000" stroke-width="3" stroke-linejoin="round"/>
<path d="M1130.1,42.3 L1129,80.5 L1119.2,67 Z" fill="#ffe648"/>
<path d="M1130.1,42.3 L1140.6,66.3 L1129,80.5 Z" fill="#f2b40a"/>
<path d="M1165,71.3 L1129,80.5 L1140.6,66.3 Z" fill="#ffe040"/>
<path d="M1165,71.3 L1146.5,88.1 L1129,80.5 Z" fill="#e8a200"/>
<path d="M1148.6,110 L1129,80.5 L1146.5,88.1 Z" fill="#fdd224"/>
<path d="M1148.6,110 L1127.9,99.1 L1129,80.5 Z" fill="#f0ae06"/>
<path d="M1106.1,111.1 L1129,80.5 L1127.9,99.1 Z" fill="#ffe040"/>
<path d="M1106.1,111.1 L1112.2,88.8 L1129,80.5 Z" fill="#f6bc10"/>
<path d="M1094.1,72.2 L1129,80.5 L1112.2,88.8 Z" fill="#e8a200"/>
<path d="M1094.1,72.2 L1119.2,67 L1129,80.5 Z" fill="#fdd224"/>
<!-- band + brim (black base) -->
<path d="M1056.9,123.1 C1063,121.8 1069,120.5 1075.5,119.4 C1086,117.3 1097,115.3 1108.3,113.7 C1115,113 1123,112.5 1130.1,112.2 C1141,111.8 1152,112 1162.8,113.3 C1168,114 1174,115 1180,116.5 C1195,120 1209,125 1223.7,130.7 C1238,137 1253,144 1267.3,150.4 C1279,155 1290,160 1303.4,165 L1305,193 C1300,191 1295,188.5 1291.7,187 C1284,182.5 1276,178 1268.6,174.5 C1262,171 1256,167 1251.3,164 C1245,167 1240,168.5 1234,169.5 C1226,171 1218,171.5 1210.9,171.4 C1205,171 1200,170 1195,168.5 C1189,166.5 1183,164.5 1176.7,162 C1169,158.5 1161,155 1153.6,152 C1146,148.5 1138,145 1130.5,142.7 C1124.5,140.5 1119,139 1113.2,138.7 C1107,138.5 1101,139 1095.8,140.4 C1087.5,143 1079.5,146.5 1072.7,150.8 C1066,154.5 1060,158.5 1054,162.5 C1050,165 1046.5,167.5 1042.8,169.5 C1036,168.5 1030,165.5 1026,161.5 C1021.5,157.5 1019.5,152.5 1020.9,148.2 C1023.5,144.5 1027.5,142 1031.8,139.5 C1038.5,135.5 1046,132.5 1053.7,129.6 Z" fill="#121114" stroke="#000" stroke-width="3.8" stroke-linejoin="round"/>
<!-- brim top surface -->
<path d="M1062,129.5 C1072,126.5 1086,124.8 1100,124.3 C1110,123.7 1120,123.5 1130.5,123.800 C1142,125 1154,127.500 1165,130.500 C1178,134 1192,137.500 1205,141 C1211,143.500 1217,146.500 1222,150 C1220,153 1217,155.500 1213,157.500 C1208,159.500 1203,160.200 1198,160 C1190,159.500 1183,157.800 1176.700,155.400 C1169,152.500 1161,149.500 1153.600,146.200 C1146,143 1138,140 1130.500,137.500 C1123,134.800 1115,132.500 1107.400,130.600 C1100,129 1092,128 1084.300,127.700 C1076,127.800 1068,128.500 1062,129.500 Z" fill="url(#gBrim)"/>
<!-- separator line band1 / brim -->
<path d="M1085,122.500 C1100,120.500 1115,120.500 1130,121.500 C1146,123 1161,126 1176.200,129.600 C1192,134 1207,139.500 1222.400,145.800 C1234,150.500 1246,156 1257,160.800 C1265,164 1273,167 1280,170 C1287,173 1294,176 1302,179.500" fill="none" stroke="#000" stroke-width="3" stroke-linecap="round"/>
<!-- brim underside left -->
<path d="M1026.500,148 C1030,143.500 1036,139.500 1043,136.500 C1052,133 1062,131 1072,130 L1075,149 C1068,153 1062,157 1056,161 C1051,164 1047,166.500 1042.800,167.500 C1037,166.500 1032,164 1028.500,160.500 C1025.500,157 1024.500,152 1026.500,148 Z" fill="#15141c"/>
<path d="M1040,150 C1046,146 1054,145 1060,147 C1058,152 1052,158 1044,162 C1040,160 1038,155 1040,150 Z" fill="#23222c" opacity=".7"/>
<path d="M1025.400,148.500 C1024.500,153 1026.500,158.500 1030,162.400 C1034,166 1039,168 1043.900,168.200" fill="none" stroke="#9ccaf4" stroke-width="2.200" stroke-linecap="round"/>
<!-- white lines -->
<path d="M1026.500,146.200 C1029.500,142.500 1033.500,139.500 1038.100,137 C1045,133.500 1053,131 1061.200,129.500 C1069,128.200 1077,127.600 1084.300,127.700 C1092,128 1100,129 1107.400,130.600 C1115,132.500 1123,134.800 1130.500,137.500 C1138,140 1146,143 1153.600,146.200 C1161,149.500 1169,152.500 1176.700,155.400" fill="none" stroke="#e6e2e4" stroke-width="2.300" stroke-linecap="round"/>
<path d="M1026.500,146.200 C1029.500,142.500 1033.500,139.500 1038.100,137 C1040,136 1042,135.200 1043.900,134.600" fill="none" stroke="#f0a8c0" stroke-width="2.300" stroke-linecap="round"/>
<path d="M1176.700,155.400 C1183,157.800 1190,159.500 1198,160" fill="none" stroke="#8a898e" stroke-width="1.600" stroke-linecap="round"/>
<path d="M1100,124.300 C1110,123.700 1120,123.500 1130.500,123.800 C1142,125 1154,127.500 1165,130.500 C1178,134 1192,137.500 1205,141" fill="none" stroke="#a9a8ac" stroke-width="1.300" stroke-linecap="round"/>
<path d="M1132,117.500 C1142,117.300 1152,117.800 1162,119 C1168,119.800 1174,120.800 1180,122 C1191,124.500 1202,127.500 1212.800,130.700 C1226,135 1239,139.500 1252,143.800" fill="none" stroke="#d4d0d2" stroke-width="2" stroke-linecap="round"/>
<path d="M1252,143.800 C1268,150 1284,157 1298,164" fill="none" stroke="#55545a" stroke-width="1.500" stroke-linecap="round"/>

<!-- glasses -->
<path d="M1270,195 L1310,211 L1297,232 L1266,219 Z" fill="#0c0c0f" stroke="#000" stroke-width="2"/>
<path d="M984.5,208 C985,203 987,201 990.4,199.6 C998,196 1005,194 1013.5,192 C1024,190 1034,189 1044.3,188.6 C1053,188.5 1062,189 1070.5,190.4 C1080,192 1090,194 1098.2,196 C1102,197 1105,197.5 1109,197.5 C1113,197.5 1116,198 1118.8,197.5 C1128,194 1139,191 1150,187.7 C1162,184.5 1175,182 1187,181 C1199,180.3 1211,181 1222.4,182.8 C1233,184.5 1244,186.5 1254.5,189.3 C1260,191 1266,193 1270.5,195 C1273,200 1273,210 1272,216.5 C1269,218 1266,219 1264,220 C1262,228 1260,235 1257.7,242.2 C1255,250 1252,257 1248,263 C1244,269 1240,273 1235.2,276 C1226,280 1216,283 1206.3,284 C1198,285 1190,285.2 1182.2,284.8 C1174,284 1166,283 1158.2,280.8 C1152,278.5 1146,275 1142.1,271.1 C1137,265 1133,258 1129.3,250.3 C1125.5,242 1122.5,233 1119.6,223 C1118.5,220 1117.5,217.5 1116.7,216.6 L1099.7,216.6 C1099,220 1098,224 1096.6,229 C1094.5,237 1092,245 1089,252 C1086.5,258 1083.5,263 1079.7,267.4 C1076,272 1072,276 1067.4,279.7 C1060,283 1052,285 1044.3,285.9 C1036,286 1028,285 1021.2,283.6 C1015,282 1010,280.5 1005.8,278.2 C1002,275 1000,271.5 998.1,267.4 C994.5,258 992,249 990.4,239.7 C988,230 986,222 985,215 Z" fill="#17171a" stroke="#000" stroke-width="2.5" stroke-linejoin="round"/>
<!-- frame highlights -->
<path d="M988,210 C989,205 992,203 996,201" fill="none" stroke="#e8e8ea" stroke-width="1.6" stroke-linecap="round"/>
<path d="M988.5,212 C989.5,222 991.5,231 993.5,240 C995.5,249 998,258 1001,266 C1003,270.5 1005,273.5 1008.5,275.5" fill="none" stroke="#d9d9dc" stroke-width="1.5" stroke-linecap="round" opacity=".9"/>
<path d="M1012,277.5 C1020,280 1030,281.5 1042,281.5 C1052,281 1060,279 1066,276" fill="none" stroke="#e8e8ea" stroke-width="1.8" stroke-linecap="round"/>
<path d="M1010,196.5 C1022,193.5 1034,192 1046,192 C1058,192 1068,193.5 1078,195.5" fill="none" stroke="#8d8d92" stroke-width="1.6" stroke-linecap="round" opacity=".8"/>
<path d="M1132,196.5 C1145,192 1160,188 1175,186 C1190,184.5 1205,184.5 1220,186.5" fill="none" stroke="#9c9ca0" stroke-width="1.6" stroke-linecap="round" opacity=".8"/>
<path d="M1205,185 C1220,186 1240,189.5 1264,196.5" fill="none" stroke="#f0f0f2" stroke-width="2" stroke-linecap="round"/>
<path d="M1130.5,223 C1133,232 1136.5,241 1140.5,249 C1144,256 1148,262.5 1152,267 C1156,270 1161,272.5 1167,274" fill="none" stroke="#dcdce0" stroke-width="1.7" stroke-linecap="round" opacity=".95"/>
<path d="M1167,274 C1180,276.5 1195,276.5 1208,274.5 C1218,273 1227,270 1234,266.5" fill="none" stroke="#f2f2f4" stroke-width="1.9" stroke-linecap="round"/>
<path d="M1236,264 C1241,258 1245,250 1248,241" fill="none" stroke="#8d8d92" stroke-width="1.5" stroke-linecap="round" opacity=".8"/>
<path d="M1272,198 L1271.5,215" fill="none" stroke="#6a6a6e" stroke-width="1.6"/>
<!-- bridge -->
<path d="M1100,200 C1106,201.5 1112,201.5 1117,200 L1116,204 C1111,205 1106,205 1101,204 Z" fill="#c9c9cd"/>
<path d="M1102,205 L1115,205 L1114.5,215 L1102.5,215 Z" fill="#2c2c31"/>
<!-- lenses -->
<path d="M1000.4,212 C1001,209 1003,208 1006,207 C1011,205.5 1016,204.5 1021.2,203.5 C1031,202 1042,201.5 1052,202 C1062,202.5 1073,204 1082.8,207.3 C1085,210 1085.5,216 1085.1,221.2 C1084,229 1082,237 1079.7,244.3 C1077.5,251 1074.5,257.5 1070.5,262.8 C1066,268 1059,271 1052,272.8 C1044,274 1036,273.5 1028.9,272 C1023,270.5 1017.5,268 1013.5,264.3 C1010,258 1007.5,251 1005.8,244.3 C1003.5,236.5 1001.5,229 1000.4,221.2 Z" fill="url(#gLens)"/>
<path d="M1134,209 C1134.5,206 1136,204.5 1139,203 C1142.5,201 1146,199 1150,197.3 C1160,194.5 1171,193 1182,192.5 C1196,192 1210,193 1222.4,195.7 C1230,197.5 1238,200 1243.2,203.7 C1245,209 1244.8,215 1244,221.4 C1242.8,229.5 1241,238 1238.4,245.4 C1236,251.5 1233,257 1228.8,261.5 C1222,265.5 1214,267.8 1206.3,268.7 C1196,269.5 1185,269.3 1174.2,267.9 C1166,266.5 1159,264 1153.3,259.9 C1148.5,255 1145,248.5 1142.1,242.2 C1139.5,235.5 1137.2,228.5 1135.7,221.4 Z" fill="url(#gLens)"/>
<!-- lens reflections -->
<path d="M1013.5,211 C1027,207.5 1042,206 1056.6,205.8 L1036.6,239.7 C1029,239.5 1021,238.5 1015,236.6 C1013,228 1012.5,219 1013.5,211 Z" fill="url(#gRefL)"/>
<path d="M1153.3,205.5 C1170,201 1188,198.5 1206.3,197.6 L1179,232.6 C1170,231.5 1160,228.5 1153.3,224.6 C1151.5,218 1151.8,211 1153.3,205.5 Z" fill="url(#gRefR)"/>
<!-- headband lower block -->
<path d="M1303.4,164 L1353.5,169.3 C1356,184 1358,199 1360.5,215 L1312.4,213 Z" fill="#131216" stroke="#000" stroke-width="3.5" stroke-linejoin="round"/>
<path d="M1312.4,165 L1325.2,211" fill="none" stroke="#b4b4b6" stroke-width="2"/>
<path d="M1316,166 L1328,211" fill="none" stroke="#3a3a3e" stroke-width="3"/>
<path d="M1349,170 L1358,213" fill="none" stroke="#f48ca4" stroke-width="2.6"/>

<!-- headphone -->
<g transform="rotate(-4 1345 272)">
<ellipse cx="1334" cy="276" rx="44.5" ry="63" fill="#0e0e11" stroke="#000" stroke-width="3.5"/>
<path d="M1299,236 C1292,260 1292,292 1300,318" fill="none" stroke="#a8a8ac" stroke-width="2" stroke-linecap="round"/>
<path d="M1304,230 C1296,258 1296,294 1305,324" fill="none" stroke="#3c3c40" stroke-width="3" stroke-linecap="round"/>
<ellipse cx="1349" cy="275" rx="43.5" ry="60" fill="url(#gCup)" stroke="#000" stroke-width="3.5"/>
<path d="M1318,230 C1309,258 1309,292 1319,318" fill="none" stroke="#8a8a8e" stroke-width="2.2" stroke-linecap="round"/>
<ellipse cx="1359.5" cy="275.6" rx="32.3" ry="49.6" fill="url(#gRing)" stroke="#000" stroke-width="2.5"/>
<path d="M1331,252 C1335,240 1343,231 1354,226.5 C1346,236 1341,246 1338.5,258 Z" fill="#f2f2f5" opacity=".9"/>
<path d="M1327.5,288 C1329,300 1334,310 1342,318 C1338,306 1337,298 1337,290 Z" fill="#b4b4ba" opacity=".8"/>
<ellipse cx="1365.2" cy="274.6" rx="20.7" ry="36.5" fill="url(#gDisc)" stroke="#000" stroke-width="2.5"/>
<path d="M1350,326 C1368,328 1384,316 1390.5,292" fill="none" stroke="#d8a8bc" stroke-width="1.6" opacity=".75"/>
</g>

<!-- mic boom -->
<path d="M1250,336.5 C1262,335 1270,333 1278.2,330.2 C1287,327.5 1295,323.5 1302.2,319.3 C1309,315 1315,310 1319.7,304" fill="none" stroke="#000" stroke-width="8.5" stroke-linecap="round"/>
<path d="M1252,335 C1262,333.5 1270,331.5 1278,328.8 C1286.5,326 1294.5,322 1301.5,317.8 C1308,313.5 1314,309 1318.5,303.5" fill="none" stroke="#d4d4d8" stroke-width="2.4" stroke-linecap="round"/>
<circle cx="1320" cy="303" r="5" fill="#2a2a2e" stroke="#000" stroke-width="2.5"/>
<!-- mic -->
<g transform="rotate(-5 1224.5 340)">
<rect x="1198.5" y="325.5" width="52" height="29" rx="8" fill="url(#gMic)" stroke="#000" stroke-width="3.5"/>
<rect x="1206" y="330" width="39" height="9.5" rx="2" fill="#e6e6e0"/>
<rect x="1206" y="335.5" width="39" height="4.5" rx="1.5" fill="#85857f"/>
<rect x="1206" y="330" width="5" height="10" rx="1.5" fill="#9a9a96"/>
</g>
</svg>

</body>
</html>
